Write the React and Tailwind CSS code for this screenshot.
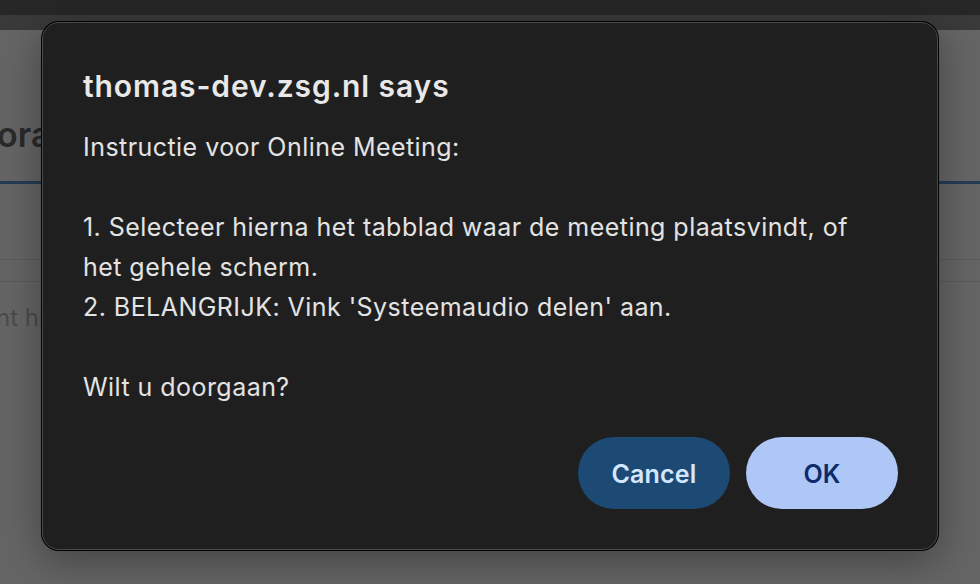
import React from 'react'

const message = [
    'Instructie voor Online Meeting:',
    '',
    '1. Selecteer hierna het tabblad waar de meeting plaatsvindt, of',
    'het gehele scherm.',
    "2. BELANGRIJK: Vink 'Systeemaudio delen' aan.",
    '',
    'Wilt u doorgaan?'
].join('\n')

function Backdrop() {
    return (
        <div className="flex flex-col h-[584px] w-[980px] overflow-hidden bg-[#656565]">
            <div className="h-[15px] bg-[#272727]" />
            <div className="h-[15px] bg-[#3a3a3a]" />
            <div className="flex-1 flex flex-col">
                <h1 className="mt-[86px] -ml-[3px] h-[38px] text-[34px] leading-[38px] font-semibold text-[#2a2a2a]">ora</h1>
                <div className="mt-[27px] h-[3px] bg-[#243c54]" />
                <div className="mt-[75px] h-px bg-[#5a5a5a]" />
                <div className="mt-[21px] h-px bg-[#5a5a5a]" />
                <p className="mt-[22px] -ml-[4px] text-[24px] leading-[28px] text-[#4a4a4a]">nt hi</p>
            </div>
        </div>
    )
}

function AlertDialog() {
    return (
        <div className="absolute left-[41px] top-[21px] w-[898px] h-[530px] rounded-[18px] bg-black p-px shadow-[0_10px_40px_rgba(0,0,0,0.35)]">
            <div className="h-full rounded-[17px] border border-[#4a4a4a] bg-[#1f1f1f] pl-[40px] pr-[39px] pt-[45px] flex flex-col">
                <h2 className="text-[30px] leading-[36px] font-semibold text-[#e8e8e8] tracking-[0.9px]">
                    thomas-dev.zsg.nl says
                </h2>
                <p className="mt-[23px] whitespace-pre-line text-[25px] leading-[40px] text-[#e3e3e3] tracking-[0.45px]">
                    {message}
                </p>
                <div className="mt-[30px] flex justify-end gap-[16px]">
                    <button type="button" className="w-[152px] h-[72px] pt-[3px] rounded-full bg-[#1d4a75] text-[25px] font-semibold tracking-[0.2px] text-[#d4e7ff]">
                        Cancel
                    </button>
                    <button type="button" className="w-[152px] h-[72px] pt-[3px] rounded-full bg-[#aec7f6] text-[25px] font-semibold tracking-[0.2px] text-[#0d2a6b]">
                        OK
                    </button>
                </div>
            </div>
        </div>
    )
}

export default function App() {
    return (
        <div className="relative w-[980px] h-[584px] font-['Inter',_'Noto_Sans',sans-serif]">
            <Backdrop />
            <AlertDialog />
        </div>
    )
}
